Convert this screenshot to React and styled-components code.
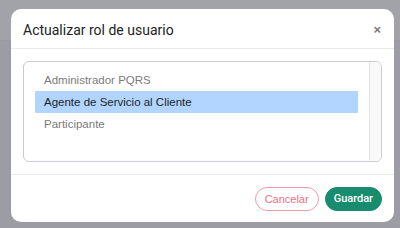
import React from "react";
import styled, { createGlobalStyle } from "styled-components";

const Global = createGlobalStyle`
  html, body { margin: 0; padding: 0; }
  body {
    width: 400px; height: 228px; overflow: hidden;
    background: #9d9ea5;
    font-family: "Liberation Sans", Arial, sans-serif;
  }
`;

const Backdrop = styled.div`
  width: 400px;
  height: 228px;
  background: linear-gradient(#a2a3a9 0 40px, #999aa1 40px 41px, #9c9da4 41px);
  padding: 9px 6px 6px 11px;
  box-sizing: border-box;
`;

const Modal = styled.div`
  width: 383px;
  height: 213px;
  background: #fff;
  border-radius: 10px;
  display: flex;
  flex-direction: column;
  overflow: hidden;
`;

const Header = styled.div`
  height: 39px;
  display: flex;
  align-items: center;
  justify-content: space-between;
  padding: 0 13px 0 12px;
  border-bottom: 1px solid #e9ecef;
`;

const Title = styled.h2`
  margin: 0;
  font-family: Roboto, "Liberation Sans", sans-serif;
  font-weight: 400;
  font-size: 14px;
  color: #222;
  padding-top: 2px;
`;

const Close = styled.span`
  font-family: "Liberation Sans", Arial, sans-serif;
  font-weight: 700;
  font-size: 13px;
  color: #7a7a7a;
  line-height: 1;
  margin-top: 2px;
`;

const Body = styled.div`
  padding: 12px;
  border-bottom: 1px solid #e9ecef;
`;

const ListBox = styled.div`
  height: 99px;
  border: 1px solid #c8ccd3;
  border-radius: 6px;
  display: flex;
  overflow: hidden;
`;

const Options = styled.div`
  flex: 1;
  padding: 7px 11px 0 11px;
  display: flex;
  flex-direction: column;
`;

const Option = styled.div`
  height: 22px;
  line-height: 22px;
  padding-left: 9px;
  font-size: 11.5px;
  color: ${(p) => (p.$selected ? "#1e1e1e" : "#7b7b7b")};
  background: ${(p) => (p.$selected ? "#b1d5fe" : "transparent")};
  border-radius: 1px;
`;

const Scrollbar = styled.div`
  width: 11px;
  background: #f9f9f9;
  border-left: 1px solid #e6e6e6;
`;

const Footer = styled.div`
  flex: 1;
  display: flex;
  justify-content: flex-end;
  align-items: center;
  gap: 6px;
  padding: 0 12px 0 0;
`;

const Button = styled.button`
  box-sizing: border-box;
  height: 24px;
  border-radius: 12px;
  font-family: ${(p) => (p.$primary ? "Roboto, " : "")}"Liberation Sans", Arial, sans-serif;
  font-size: 11px;
  padding: 0 ${(p) => (p.$primary ? "8px" : "9px")};
  cursor: pointer;
  border: 1px solid ${(p) => (p.$primary ? "#1a8c6e" : "#f29aa8")};
  background: ${(p) => (p.$primary ? "#1a8c6e" : "#fff")};
  color: ${(p) => (p.$primary ? "#fff" : "#ec6f82")};
  font-weight: ${(p) => (p.$primary ? 500 : 400)};
`;

export default function App() {
  return (
    <>
      <Global />
      <Backdrop>
        <Modal>
          <Header>
            <Title>Actualizar rol de usuario</Title>
            <Close>×</Close>
          </Header>
          <Body>
            <ListBox>
              <Options>
                <Option>Administrador PQRS</Option>
                <Option $selected>Agente de Servicio al Cliente</Option>
                <Option>Participante</Option>
              </Options>
              <Scrollbar />
            </ListBox>
          </Body>
          <Footer>
            <Button>Cancelar</Button>
            <Button $primary>Guardar</Button>
          </Footer>
        </Modal>
      </Backdrop>
    </>
  );
}
